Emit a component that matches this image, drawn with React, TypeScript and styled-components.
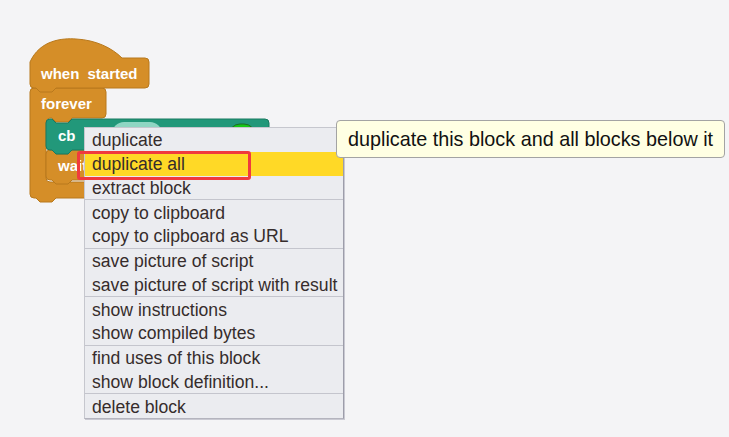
import React from 'react';
import styled, { createGlobalStyle } from 'styled-components';

const GlobalStyle = createGlobalStyle`
  html, body {
    margin: 0;
    padding: 0;
    background: #f4f4f6;
  }
  #root {
    width: 729px;
    height: 437px;
  }
`;

const Canvas = styled.div`
  position: relative;
  width: 729px;
  height: 437px;
  overflow: hidden;
  background: #f4f4f6;
  font-family: 'Liberation Sans', Arial, sans-serif;
`;

const Script = styled.svg`
  position: absolute;
  left: 0;
  top: 0;
`;

const BlockLabel = styled.text`
  font-family: 'Liberation Sans', Arial, sans-serif;
  font-weight: bold;
  font-size: 15px;
  word-spacing: 4px;
  fill: #ffffff;
`;

const Menu = styled.div`
  position: absolute;
  left: 84px;
  top: 127px;
  width: 258px;
  display: flex;
  flex-direction: column;
  background: #ebecf0;
  border: 1px solid #c6c7ce;
  border-right-color: #9d9daa;
  border-bottom-color: #b4b4be;
  box-shadow: 1px 1px 0 #c9c9d2;
`;

const Item = styled.div<{ $active?: boolean }>`
  height: 23.75px;
  box-sizing: border-box;
  padding-top: 2px;
  display: flex;
  align-items: center;
  padding-left: 7px;
  font-size: 17.6px;
  color: #362c2c;
  white-space: nowrap;
  background: ${(p) => (p.$active ? '#ffd926' : 'transparent')};
`;

const Separator = styled.div`
  height: 1px;
  background: #c4c5cd;
`;

const Highlight = styled.div`
  position: absolute;
  left: 77px;
  top: 151px;
  width: 168px;
  height: 23px;
  border: 3px solid #f03a3e;
  border-radius: 3px;
  pointer-events: none;
`;

const Tooltip = styled.div`
  position: absolute;
  left: 336px;
  top: 120px;
  width: 389px;
  height: 38px;
  display: flex;
  align-items: center;
  padding-left: 11px;
  box-sizing: border-box;
  background: #ffffe3;
  border: 1px solid #a3a3a3;
  border-radius: 4px;
  font-size: 19.8px;
  color: #111111;
  white-space: nowrap;
`;

const groups: string[][] = [
  ['duplicate', 'duplicate all', 'extract block'],
  ['copy to clipboard', 'copy to clipboard as URL'],
  ['save picture of script', 'save picture of script with result'],
  ['show instructions', 'show compiled bytes'],
  ['find uses of this block', 'show block definition...'],
  ['delete block'],
];

const orange = '#d58e28';
const orangeEdge = '#b8791d';
const green = '#22987a';
const greenEdge = '#187a60';

const ScriptDrawing: React.FC = () => (
  <Script width="300" height="215" viewBox="0 0 300 215">
    {/* forever C block */}
    <path
      d="M34,88 H102 Q106,88 106,92 V114 Q106,118 102,118 H72 L68,122 H56 L52,118 H50 Q46,118 46,122 V178 Q46,182 50,182 H96 Q100,182 100,186 V194 Q100,198 96,198 H56 L52,202 H40 L36,198 H34 Q30,198 30,194 V92 Q30,88 34,88 Z"
      fill={orange}
      stroke={orangeEdge}
      strokeWidth="1"
    />
    {/* hat block */}
    <path
      d="M30,62 C40,40 62,38 76,39 C96,40 112,48 122,58 H145 Q149,58 149,62 V84 Q149,88 145,88 H56 L52,92 H40 L36,88 H34 Q30,88 30,84 Z"
      fill={orange}
      stroke={orangeEdge}
      strokeWidth="1"
    />
    {/* wait block */}
    <path
      d="M50,150 H52 L56,154 H68 L72,150 H116 Q120,150 120,154 V176 Q120,180 116,180 H72 L68,184 H56 L52,180 H50 Q46,180 46,176 V154 Q46,150 50,150 Z"
      fill={orange}
      stroke={orangeEdge}
      strokeWidth="1"
    />
    {/* cb block */}
    <path
      d="M50,119 H52 L56,123 H68 L72,119 H265 Q269,119 269,123 V146 Q269,150 265,150 H72 L68,154 H56 L52,150 H50 Q46,150 46,146 V123 Q46,119 50,119 Z"
      fill={green}
      stroke={greenEdge}
      strokeWidth="1"
    />
    <rect x="112" y="122" width="50" height="24" rx="12" fill="#8fd6c3" />
    <rect x="229" y="124" width="26" height="22" rx="11" fill="#16c716" stroke="#1d6b2a" strokeWidth="1" />
    <BlockLabel x="41" y="79">when started</BlockLabel>
    <BlockLabel x="41" y="109">forever</BlockLabel>
    <BlockLabel x="58" y="141">cb</BlockLabel>
    <BlockLabel x="58" y="171">wait</BlockLabel>
  </Script>
);

export default function App() {
  return (
    <>
      <GlobalStyle />
      <Canvas>
        <ScriptDrawing />
        <Menu>
          {groups.map((group, gi) => (
            <React.Fragment key={gi}>
              {gi > 0 && <Separator />}
              {group.map((label) => (
                <Item key={label} $active={label === 'duplicate all'}>
                  {label}
                </Item>
              ))}
            </React.Fragment>
          ))}
        </Menu>
        <Highlight />
        <Tooltip>duplicate this block and all blocks below it</Tooltip>
      </Canvas>
    </>
  );
}
